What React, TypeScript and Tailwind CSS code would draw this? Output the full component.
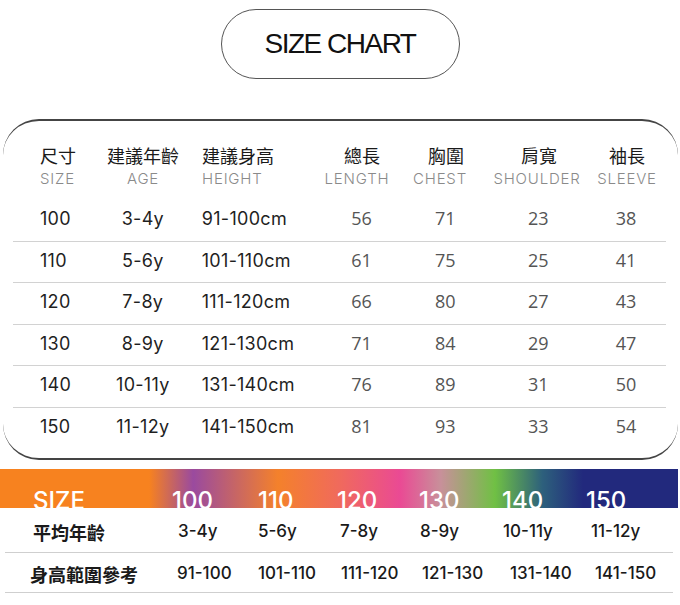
import React from 'react';

const headers = [
  { zh: '尺寸', en: 'SIZE' },
  { zh: '建議年齡', en: 'AGE' },
  { zh: '建議身高', en: 'HEIGHT' },
  { zh: '總長', en: 'LENGTH' },
  { zh: '胸圍', en: 'CHEST' },
  { zh: '肩寬', en: 'SHOULDER' },
  { zh: '袖長', en: 'SLEEVE' },
];

const rows = [
  ['100', '3-4y', '91-100cm', '56', '71', '23', '38'],
  ['110', '5-6y', '101-110cm', '61', '75', '25', '41'],
  ['120', '7-8y', '111-120cm', '66', '80', '27', '43'],
  ['130', '8-9y', '121-130cm', '71', '84', '29', '47'],
  ['140', '10-11y', '131-140cm', '76', '89', '31', '50'],
  ['150', '11-12y', '141-150cm', '81', '93', '33', '54'],
];

// fixed column boxes, measured from the line container's left edge (x=13)
const cols = [
  'ml-[27px] w-[60px] text-left',
  'ml-[3px] w-[80px] text-center',
  'ml-[19px] w-[110px] text-left',
  'ml-[10px] w-[80px] text-center',
  'ml-[4px] w-[80px] text-center',
  'ml-[5px] w-[96px] text-center',
  'w-[80px] text-center',
];

const enNudge = ['', '', '', '-translate-x-[5px]', '-translate-x-[6px]', '-translate-x-[2px]', ''];

const mont = "font-['Inter',sans-serif]";
const cjk = "font-['Noto_Sans_CJK_TC',sans-serif]";

export default function App() {
  return (
    <div className="w-[680px] h-[605px] bg-white overflow-hidden">
      <div className="mx-auto mt-[9px] flex h-[70px] w-[239px] items-center justify-center rounded-full border border-[#555]">
        <span className="font-['Liberation_Sans',sans-serif] text-[28px] tracking-[-1.5px] text-[#111] leading-none">
          SIZE CHART
        </span>
      </div>

      <div className="mt-[40px] ml-[3px] w-[675px] rounded-[36px] border-y-2 border-[#444] pt-[22px] pb-[10px]">
        <div className="mx-[10px] flex">
          {headers.map((h, i) => (
            <div key={h.en} className={cols[i]}>
              <div className={`${cjk} text-[18px] leading-[24px] text-[#1a1a1a] whitespace-nowrap`}>{h.zh}</div>
              <div
                className={`${mont} mt-[2px] text-[15px] font-light leading-[20px] tracking-[0.8px] text-[#8a8a8a] whitespace-nowrap ${enNudge[i]}`}
              >
                {h.en}
              </div>
            </div>
          ))}
        </div>

        <div className="mt-[10px] ml-[10px] mr-[12px]">
          {rows.map((r, ri) => (
            <div
              key={r[0]}
              className={`flex h-[41.5px] items-center pb-[3px] ${ri > 0 ? 'border-t border-[#d2d2d2]' : ''}`}
            >
              {r.map((v, i) => (
                <div
                  key={i}
                  className={
                    i < 3
                      ? `${cols[i]} ${mont} text-[18px] tracking-[0.3px] text-[#1f1f1f] whitespace-nowrap`
                      : `${cols[i]} font-['Open_Sans',sans-serif] text-[18px] text-[#555] whitespace-nowrap`
                  }
                >
                  {v}
                </div>
              ))}
            </div>
          ))}
        </div>
      </div>

      <div className="mt-[9px] h-[39px] w-[678px] overflow-hidden bg-[linear-gradient(90deg,#f7821f_0%,#f7821f_22%,#9a4a9f_28.5%,#f4812b_41%,#f06a5c_50%,#ea4a94_59%,#c8909a_65%,#70c044_73%,#2d607c_80%,#22297d_86%,#22297d_100%)]">
        <div className={`flex pt-[20px] ${mont} text-[24px] font-medium leading-[24px] text-white`}>
          <div className="w-[172px] pl-[33px]">SIZE</div>
          <div className="w-[86px]">100</div>
          <div className="w-[79px]">110</div>
          <div className="w-[82px]">120</div>
          <div className="w-[83px]">130</div>
          <div className="w-[84px]">140</div>
          <div>150</div>
        </div>
      </div>

      <div className="ml-[5px] mr-[7px] text-[#1a1a1a]">
        <div className={`flex h-[45px] items-center pt-[4px] border-b border-[#cfcfcf] ${mont} text-[17px] font-medium`}>
          <div className={`w-[173px] pl-[28px] ${cjk} text-[18px] font-bold`}>平均年齡</div>
          <div className="w-[80px]">3-4y</div>
          <div className="w-[82px]">5-6y</div>
          <div className="w-[80px]">7-8y</div>
          <div className="w-[83px]">8-9y</div>
          <div className="w-[88px]">10-11y</div>
          <div>11-12y</div>
        </div>
        <div className={`flex h-[40px] items-center pt-[3px] border-b border-[#cfcfcf] ${mont} text-[17px] font-medium`}>
          <div className={`w-[172px] pl-[25px] ${cjk} text-[18px] font-bold`}>身高範圍參考</div>
          <div className="w-[81px]">91-100</div>
          <div className="w-[83px]">101-110</div>
          <div className="w-[81px]">111-120</div>
          <div className="w-[88px]">121-130</div>
          <div className="w-[85px]">131-140</div>
          <div>141-150</div>
        </div>
      </div>
    </div>
  );
}
